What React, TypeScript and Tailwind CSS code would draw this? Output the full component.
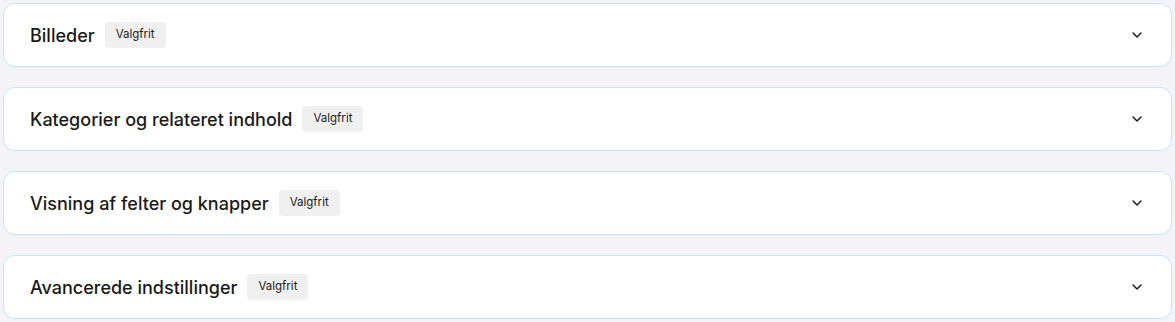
import { ChevronDown } from "lucide-react";

const sections = [
  "Billeder",
  "Kategorier og relateret indhold",
  "Visning af felter og knapper",
  "Avancerede indstillinger",
];

export default function App() {
  return (
    <div
      className="min-h-[322px] bg-[#f4f4f8] px-[3px] pt-[3px]"
      style={{ fontFamily: "Inter, 'Noto Sans', sans-serif" }}
    >
      <div className="flex flex-col gap-[20px]">
        {sections.map((title) => (
          <div
            key={title}
            className="flex h-[64px] items-center justify-between rounded-[12px] border border-[#c5e3f6] bg-white pl-[26px] pr-[26px]"
          >
            <div className="flex items-center gap-[10px]">
              <h3 className="text-[18px] font-medium text-[#1a1a1a]">{title}</h3>
              <span className="flex h-[26px] items-center rounded-[4px] bg-[#f0f0f0] px-[11px] text-[11.5px] text-[#222]">
                Valgfrit
              </span>
            </div>
            <ChevronDown className="h-[16px] w-[16px] text-[#1a1a1a]" strokeWidth={2.2} />
          </div>
        ))}
      </div>
    </div>
  );
}
